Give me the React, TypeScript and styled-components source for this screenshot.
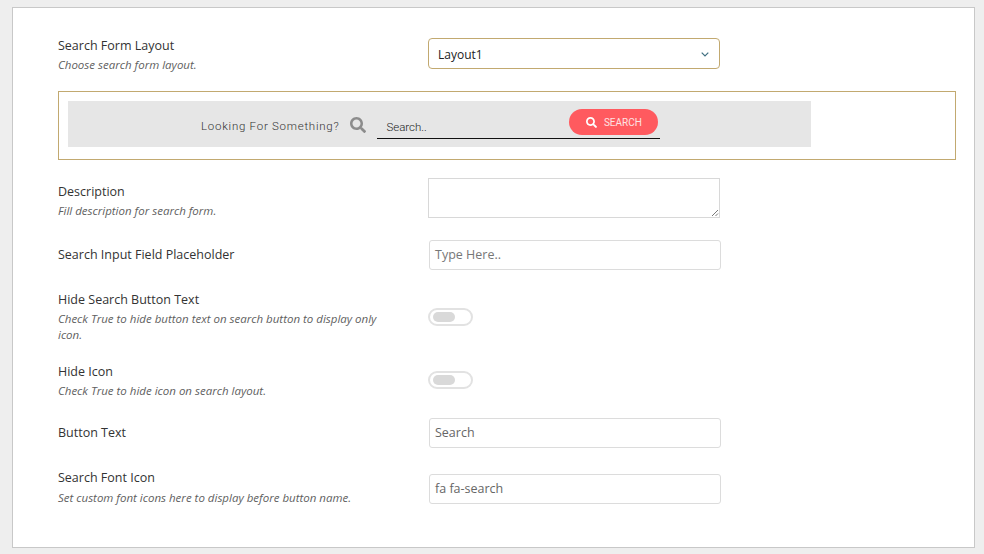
import React from "react";
import styled, { createGlobalStyle } from "styled-components";
import { FaSearch } from "react-icons/fa";

const GlobalStyle = createGlobalStyle`
  html, body { margin: 0; padding: 0; background: #eeeeee; }
  body { font-family: "Open Sans", "Liberation Sans", sans-serif; }
  * { box-sizing: border-box; }
`;

const Page = styled.div`
  width: 984px;
  height: 554px;
  padding: 7px 9px 6px 12px;
  overflow: hidden;
`;

const Card = styled.div`
  height: 541px;
  background: #fff;
  border: 1px solid #c8c8c8;
  padding: 30px 18px 0 45px;
`;

const Row = styled.div<{ $top: number; $height: number }>`
  display: grid;
  grid-template-columns: 370px 1fr;
  margin-top: ${(p) => p.$top}px;
  height: ${(p) => p.$height}px;
`;

const LabelCol = styled.div<{ $pad?: number }>`
  padding-top: ${(p) => p.$pad ?? 0}px;
`;

const Label = styled.div`
  font-size: 12.5px;
  line-height: 17px;
  color: #333;
`;

const Desc = styled.div<{ $gap?: number }>`
  font-size: 11.5px;
  line-height: 16px;
  font-style: italic;
  color: #5f5f5f;
  width: 325px;
  margin-top: ${(p) => p.$gap ?? 3}px;
`;

const SelectBox = styled.div`
  width: 292px;
  height: 31px;
  margin-top: 1px;
  border: 1px solid #c2a970;
  border-radius: 4px;
  padding: 1px 10px 0 9px;
  display: flex;
  align-items: center;
  justify-content: space-between;
  font-size: 12px;
  color: #222;
`;

const Preview = styled.div`
  margin-top: 22px;
  width: 898px;
  height: 69px;
  border: 1px solid #c2a970;
  padding: 9px;
`;

const PreviewBar = styled.div`
  width: 743px;
  height: 46px;
  background: #e6e6e6;
  display: flex;
  align-items: flex-start;
  padding: 15px 0 0 133px;
`;

const Looking = styled.div`
  font-family: Roboto, sans-serif;
  font-size: 11.5px;
  font-weight: 300;
  line-height: 20px;
  letter-spacing: 0.74px;
  color: #333;
  white-space: nowrap;
`;

const LookingIcon = styled(FaSearch)`
  width: 16px;
  height: 16px;
  color: #8c8c8c;
  margin: 1px 0 0 11px;
`;

const SearchField = styled.div`
  position: relative;
  margin: 0 0 0 11px;
  width: 283px;
  height: 23px;
  border-bottom: 1px solid #111;
  padding: 4px 0 0 9px;
  font-family: Roboto, sans-serif;
  font-size: 11.5px;
  font-weight: 300;
  line-height: 14px;
  color: #222;
`;

const SearchButton = styled.div`
  position: absolute;
  left: 192px;
  top: -7px;
  width: 89px;
  height: 26px;
  border-radius: 13px;
  background: #ff5a5f;
  color: #fde3e3;
  display: flex;
  align-items: center;
  justify-content: center;
  gap: 7px;
  padding: 1px 0 0 0;
  font-size: 10px;
  font-weight: 400;
  svg { width: 11px; height: 11px; color: #fff; }
`;

const Textarea = styled.div`
  position: relative;
  width: 292px;
  height: 40px;
  border: 1px solid #d8d8d8;
`;

const Grip = styled.svg`
  position: absolute;
  right: 0;
  bottom: 0;
  width: 8px;
  height: 8px;
`;

const TextInput = styled.div<{ $muted?: boolean; $offset?: number }>`
  width: 292px;
  height: 30px;
  margin: ${(p) => p.$offset ?? 0}px 0 0 1px;
  border: 1px solid #dcdcdc;
  border-radius: 3px;
  padding: 0 5px 2px;
  display: flex;
  align-items: center;
  font-size: 12.5px;
  color: ${(p) => (p.$muted ? "#777" : "#666")};
`;

const Toggle = styled.div<{ $top: number }>`
  margin-top: ${(p) => p.$top}px;
  width: 45px;
  height: 18px;
  border: 2px solid #e2e2e2;
  border-radius: 9px;
  padding: 2px 3px;
`;

const Knob = styled.div`
  width: 22px;
  height: 10px;
  border-radius: 5px;
  background: #d9d9d9;
`;

export default function App() {
  return (
    <Page>
      <GlobalStyle />
      <Card>
        <Row $top={-1} $height={32}>
          <LabelCol>
            <Label>Search Form Layout</Label>
            <Desc>Choose search form layout.</Desc>
          </LabelCol>
          <SelectBox>
            Layout1
            <svg width="8" height="5" viewBox="0 0 8 5" fill="none">
              <path d="M.7.7L4 4l3.300-3.300" stroke="#3f6f80" strokeWidth="1.200" />
            </svg>
          </SelectBox>
        </Row>
        <Preview>
          <PreviewBar>
            <Looking>Looking For Something?</Looking>
            <LookingIcon />
            <SearchField>
              Search..
              <SearchButton>
                <FaSearch />
                SEARCH
              </SearchButton>
            </SearchField>
          </PreviewBar>
        </Preview>
        <Row $top={18} $height={40}>
          <LabelCol $pad={5}>
            <Label>Description</Label>
            <Desc>Fill description for search form.</Desc>
          </LabelCol>
          <Textarea>
            <Grip viewBox="0 0 8 8">
              <path d="M1 7l6-6M4.500 7l2.500-2.500" stroke="#555" strokeWidth="0.8" />
            </Grip>
          </Textarea>
        </Row>
        <Row $top={22} $height={30}>
          <LabelCol $pad={6}>
            <Label>Search Input Field Placeholder</Label>
          </LabelCol>
          <TextInput $muted>Type Here..</TextInput>
        </Row>
        <Row $top={21} $height={56}>
          <LabelCol>
            <Label>Hide Search Button Text</Label>
            <Desc>Check True to hide button text on search button to display only icon.</Desc>
          </LabelCol>
          <Toggle $top={17}>
            <Knob />
          </Toggle>
        </Row>
        <Row $top={16} $height={32}>
          <LabelCol>
            <Label>Hide Icon</Label>
            <Desc>Check True to hide icon on search layout.</Desc>
          </LabelCol>
          <Toggle $top={8}>
            <Knob />
          </Toggle>
        </Row>
        <Row $top={23} $height={30}>
          <LabelCol $pad={6}>
            <Label>Button Text</Label>
          </LabelCol>
          <TextInput>Search</TextInput>
        </Row>
        <Row $top={21} $height={35}>
          <LabelCol>
            <Label>Search Font Icon</Label>
            <Desc $gap={4}>Set custom font icons here to display before button name.</Desc>
          </LabelCol>
          <TextInput $offset={5}>fa fa-search</TextInput>
        </Row>
      </Card>
    </Page>
  );
}
